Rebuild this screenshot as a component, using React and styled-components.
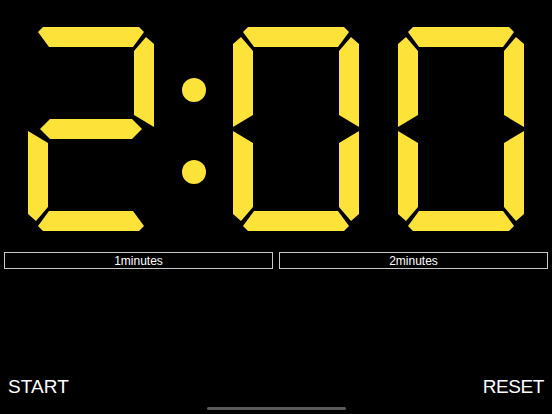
import React from 'react'
import styled, { createGlobalStyle } from "styled-components"

const GlobalStyle = createGlobalStyle`
    html, body {
        margin: 0;
        padding: 0;
        background: #000;
    }
`;

const Page = styled.div`
    width: 552px;
    height: 414px;
    display: flex;
    flex-direction: column;
    background: #000;
    color: #fff;
    font-family: "Liberation Sans", Arial, sans-serif;
    overflow: hidden;
`;

const Clock = styled.div`
    display: flex;
    align-items: flex-start;
    padding: 27px 0 0 28px;
`;

const DigitSvg = styled.svg`
    display: block;
    flex: none;
    margin-left: ${p => p.$offset || 0}px;
`;

const Colon = styled.div`
    display: flex;
    flex-direction: column;
    gap: 58px;
    padding-top: 51px;
    margin-left: 28px;
`;

const Dot = styled.span`
    display: block;
    width: 24px;
    height: 24px;
    border-radius: 50%;
    background: #fde23a;
`;

const Presets = styled.div`
    display: flex;
    gap: 6px;
    padding: 0 4px;
    margin-top: 21px;
`;

const PresetButton = styled.div`
    flex: 1;
    height: 15px;
    border: 1.5px solid #c9c9c9;
    display: flex;
    align-items: center;
    justify-content: center;
    font-size: 12px;
    color: #fff;
`;

const Footer = styled.div`
    margin-top: auto;
    display: flex;
    justify-content: space-between;
    padding: 0 8px;
    font-size: 19px;
`;

const Action = styled.span`
    color: #fff;
    letter-spacing: ${p => p.$tight ? "-0.4px" : "0.1px"};
`;

const HomeBar = styled.div`
    width: 139px;
    height: 3px;
    border-radius: 2px;
    background: #5a5a5a;
    margin: 9px auto 4px;
`;

// seven segment shapes, digit box 126 x 204
const SEGMENTS = {
    a: "10,5 15,0 111,0 116,5 105,20 21,20",
    b: "118,10 126,17 126,100 106,88 106,24",
    c: "106,116 126,104 126,187 118,194 106,180",
    d: "21,184 105,184 116,199 111,204 15,204 10,199",
    e: "0,104 20,116 20,180 8,194 0,187",
    f: "0,17 8,10 20,24 20,88 0,100",
    g: "12,102 22,92 104,92 114,102 104,112 22,112",
};

const DIGITS = {
    0: "abcdef",
    1: "bc",
    2: "abged",
    3: "abgcd",
    4: "fgbc",
    5: "afgcd",
    6: "afgedc",
    7: "abc",
    8: "abcdefg",
    9: "abcdfg",
};

function Digit({ value, offset }) {
    const on = DIGITS[value];
    return (
        <DigitSvg width="126" height="204" viewBox="0 0 126 204" $offset={offset}>
            {on.split("").map(s => (
                <polygon key={s} points={SEGMENTS[s]} fill="#fde23a" />
            ))}
        </DigitSvg>
    );
}

function App() {
    return (
        <Page>
            <GlobalStyle />
            <Clock>
                <Digit value={2} />
                <Colon>
                    <Dot />
                    <Dot />
                </Colon>
                <Digit value={0} offset={27} />
                <Digit value={0} offset={39} />
            </Clock>

            <Presets>
                <PresetButton>1minutes</PresetButton>
                <PresetButton>2minutes</PresetButton>
            </Presets>

            <Footer>
                <Action>START</Action>
                <Action $tight>RESET</Action>
            </Footer>
            <HomeBar />
        </Page>
    );
}

export default App
